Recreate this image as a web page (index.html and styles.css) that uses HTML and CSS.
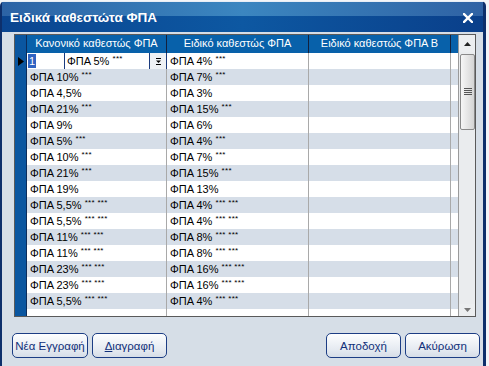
FILE: index.html
```html
<!DOCTYPE html>
<html lang="el">
<head>
<meta charset="utf-8">
<title>Ειδικά καθεστώτα ΦΠΑ</title>
<link rel="stylesheet" href="styles.css">
</head>
<body>
<div class="window">
  <div class="titlebar">
    <span class="title">Ειδικά καθεστώτα ΦΠΑ</span>
    <svg class="close" width="10" height="10" viewBox="0 0 10 10"><path d="M1 1L9 9M9 1L1 9" stroke="#fff" stroke-width="2.4" stroke-linecap="square"/></svg>
  </div>
  <div class="content">
    <div class="grid">
      <div class="rows">
        <div class="row head">
          <div class="rh"></div>
          <div class="c c1">Κανονικό καθεστώς ΦΠΑ</div>
          <div class="c c2">Ειδικό καθεστώς ΦΠΑ</div>
          <div class="c c3">Ειδικό καθεστώς ΦΠΑ Β</div>
          <div class="c c4"></div>
        </div>
        <div class="row odd">
          <div class="rh"><svg width="6" height="9" viewBox="0 0 6 9"><path d="M0 0L6 4.5L0 9Z" fill="#000"/></svg></div>
          <div class="c c1 editing">
            <div class="edit"><span class="sel">1</span></div>
            <div class="combo"><span class="ctext">ΦΠΑ 5% <span class="ast">***</span></span><div class="drop"><svg width="7" height="9" viewBox="0 0 7 9"><path d="M1 1.5H6M1 7.5H6" stroke="#000" stroke-width="1"/><path d="M1 3.5H6L3.5 6Z" fill="#000"/></svg></div></div>
          </div>
          <div class="c c2">ΦΠΑ 4% <span class="ast">***</span></div>
          <div class="c c3"></div>
          <div class="c c4"></div>
        </div>
        <div class="row even"><div class="rh"></div><div class="c c1">ΦΠΑ 10% <span class="ast">***</span></div><div class="c c2">ΦΠΑ 7% <span class="ast">***</span></div><div class="c c3"></div><div class="c c4"></div></div>
        <div class="row odd"><div class="rh"></div><div class="c c1">ΦΠΑ 4,5%</div><div class="c c2">ΦΠΑ 3%</div><div class="c c3"></div><div class="c c4"></div></div>
        <div class="row even"><div class="rh"></div><div class="c c1">ΦΠΑ 21% <span class="ast">***</span></div><div class="c c2">ΦΠΑ 15% <span class="ast">***</span></div><div class="c c3"></div><div class="c c4"></div></div>
        <div class="row odd"><div class="rh"></div><div class="c c1">ΦΠΑ 9%</div><div class="c c2">ΦΠΑ 6%</div><div class="c c3"></div><div class="c c4"></div></div>
        <div class="row even"><div class="rh"></div><div class="c c1">ΦΠΑ 5% <span class="ast">***</span></div><div class="c c2">ΦΠΑ 4% <span class="ast">***</span></div><div class="c c3"></div><div class="c c4"></div></div>
        <div class="row odd"><div class="rh"></div><div class="c c1">ΦΠΑ 10% <span class="ast">***</span></div><div class="c c2">ΦΠΑ 7% <span class="ast">***</span></div><div class="c c3"></div><div class="c c4"></div></div>
        <div class="row even"><div class="rh"></div><div class="c c1">ΦΠΑ 21% <span class="ast">***</span></div><div class="c c2">ΦΠΑ 15% <span class="ast">***</span></div><div class="c c3"></div><div class="c c4"></div></div>
        <div class="row odd"><div class="rh"></div><div class="c c1">ΦΠΑ 19%</div><div class="c c2">ΦΠΑ 13%</div><div class="c c3"></div><div class="c c4"></div></div>
        <div class="row even"><div class="rh"></div><div class="c c1">ΦΠΑ 5,5% <span class="ast">*** ***</span></div><div class="c c2">ΦΠΑ 4% <span class="ast">*** ***</span></div><div class="c c3"></div><div class="c c4"></div></div>
        <div class="row odd"><div class="rh"></div><div class="c c1">ΦΠΑ 5,5% <span class="ast">*** ***</span></div><div class="c c2">ΦΠΑ 4% <span class="ast">*** ***</span></div><div class="c c3"></div><div class="c c4"></div></div>
        <div class="row even"><div class="rh"></div><div class="c c1">ΦΠΑ 11% <span class="ast">*** ***</span></div><div class="c c2">ΦΠΑ 8% <span class="ast">*** ***</span></div><div class="c c3"></div><div class="c c4"></div></div>
        <div class="row odd"><div class="rh"></div><div class="c c1">ΦΠΑ 11% <span class="ast">*** ***</span></div><div class="c c2">ΦΠΑ 8% <span class="ast">*** ***</span></div><div class="c c3"></div><div class="c c4"></div></div>
        <div class="row even"><div class="rh"></div><div class="c c1">ΦΠΑ 23% <span class="ast">*** ***</span></div><div class="c c2">ΦΠΑ 16% <span class="ast">*** ***</span></div><div class="c c3"></div><div class="c c4"></div></div>
        <div class="row odd"><div class="rh"></div><div class="c c1">ΦΠΑ 23% <span class="ast">*** ***</span></div><div class="c c2">ΦΠΑ 16% <span class="ast">*** ***</span></div><div class="c c3"></div><div class="c c4"></div></div>
        <div class="row even"><div class="rh"></div><div class="c c1">ΦΠΑ 5,5% <span class="ast">*** ***</span></div><div class="c c2">ΦΠΑ 4% <span class="ast">*** ***</span></div><div class="c c3"></div><div class="c c4"></div></div>
        <div class="row filler"><div class="rh"></div><div class="c c1"></div><div class="c c2"></div><div class="c c3"></div><div class="c c4"></div></div>
      </div>
      <div class="scrollbar">
        <div class="sbtn up"><svg width="7" height="4" viewBox="0 0 7 4"><path d="M0 4L3.5 0L7 4Z" fill="#222"/></svg></div>
        <div class="track">
          <div class="thumb"><svg width="8" height="8" viewBox="0 0 8 8"><path d="M0 0.5H8M0 2.5H8M0 4.5H8M0 6.5H8" stroke="#555" stroke-width="1"/></svg></div>
        </div>
        <div class="sbtn down"><svg width="7" height="4" viewBox="0 0 7 4"><path d="M0 0L3.5 4L7 0Z" fill="#777"/></svg></div>
      </div>
    </div>
    <div class="buttons">
      <div class="group">
        <button class="btn b-new">Νέα Εγγραφή</button>
        <button class="btn b-del"><u>Δ</u>ιαγραφή</button>
      </div>
      <div class="group">
        <button class="btn b-ok">Αποδοχή</button>
        <button class="btn b-cancel">Ακύρωση</button>
      </div>
    </div>
  </div>
</div>
</body>
</html>
```

FILE: styles.css
```css
* { box-sizing: border-box; }
html, body { margin: 0; padding: 0; }
body {
  background: #f3f5f8;
  font-family: "Liberation Sans", Arial, sans-serif;
  font-size: 11px;
  width: 489px;
  height: 366px;
  overflow: hidden;
}
.window {
  margin-top: 1px;
  width: 486px;
  height: 400px;
  border-top: 1px solid #e8eef6;
  border-left: 2px solid #0d2f6b;
  border-right: 3px solid #0d2f6b;
  border-radius: 5px 5px 0 0;
  background: #d6dee7;
  display: flex;
  flex-direction: column;
}
.titlebar {
  height: 30px;
  display: flex;
  align-items: center;
  justify-content: space-between;
  padding: 0 10px 0 8px;
  background:
    linear-gradient(to right, #2c63a5 0%, #3b86c0 50%, #2f62a4 100%) top / 100% 14px no-repeat,
    linear-gradient(to right, #0a4590 0%, #0d58a2 50%, #0a3f8a 100%) bottom / 100% 16px no-repeat;
}
.title {
  color: #fff;
  font-weight: bold;
  font-size: 13.5px;
  padding-top: 1px;
}
.close { display: block; margin-top: 1px; }
.content {
  flex: 1;
  padding: 2px 3px 0 10px;
  display: flex;
  flex-direction: column;
}
.grid {
  margin-left: 2px;
  width: 462px;
  height: 283px;
  border: 1px solid #5a5a5a;
  display: flex;
  background: #fff;
}
.rows {
  width: 443px;
  display: flex;
  flex-direction: column;
}
.row {
  display: flex;
  height: 16px;
  line-height: 16px;
}
.row.head { height: 18px; line-height: 17px; background: #0861aa; color: #fff; }
.row.odd { background: #fff; }
.row.even { background: #d6dee8; }
.row.filler { height: 7px; background: #fff; }
.rh {
  width: 12px;
  flex: none;
  background: #0a56a0;
  border-right: 1px solid #0c2c5a;
  display: flex;
  align-items: center;
  justify-content: center;
  padding-left: 1px;
}
.c {
  flex: none;
  border-right: 1px solid #a9a9a9;
  padding-left: 3px;
  white-space: nowrap;
  overflow: hidden;
}
.c1 { width: 140px; }
.c2 { width: 142px; }
.c3 { width: 142px; }
.c4 { width: 7px; border-right: none; }
.head .c { border-right-color: #13213d; text-align: center; padding-left: 0; }
.head .c4 { border-right: none; }
.ast {
  font-size: 8px;
  vertical-align: top;
  line-height: 12px;
  letter-spacing: 0.3px;
}
.c1.editing {
  display: flex;
  padding-left: 0;
  border-right: 1px solid #1b3b7e;
}
.edit {
  width: 38px;
  min-width: 38px;
  flex: none;
  border-right: 1px solid #1b3b7e;
  padding: 1px 0 1px 1px;
  line-height: 14px;
}
.sel {
  display: inline-block;
  background: #2f63c2;
  color: #fff;
  padding: 0 1px;
  height: 14px;
}
.combo {
  flex: 1;
  display: flex;
  justify-content: space-between;
}
.ctext { padding-left: 2px; }
.drop {
  width: 17px;
  flex: none;
  border-left: 1px solid #1b3b7e;
  background: #eef1f5;
  display: flex;
  align-items: center;
  justify-content: center;
}
.drop svg { display: block; }
.scrollbar {
  width: 17px;
  border-left: 1px solid #9a9a9a;
  background: #eaecee;
  display: flex;
  flex-direction: column;
}
.sbtn {
  height: 17px;
  display: flex;
  align-items: center;
  justify-content: center;
  background: #eceef0;
}
.sbtn.down { height: 12px; }
.track {
  flex: 1;
  padding-top: 2px;
}
.thumb {
  margin-left: 1px;
  width: 15px;
  height: 76px;
  border: 1px solid #8a8a8a;
  border-radius: 2px;
  background: linear-gradient(to right, #f6f6f6, #e2e2e2 60%, #d4d4d4);
  display: flex;
  align-items: center;
  justify-content: center;
}
.thumb svg { display: block; }
.buttons {
  margin-top: 16px;
  display: flex;
  justify-content: space-between;
}
.group { display: flex; gap: 4px; }
.btn {
  height: 25px;
  border: 1px solid #1c3d84;
  border-radius: 5px;
  background: linear-gradient(to bottom, #fdfeff, #e4e9f0 70%, #d6dde7);
  color: #10307a;
  font-family: "Liberation Sans", Arial, sans-serif;
  font-size: 11.5px;
  padding: 0;
}
.btn u { text-decoration: underline; }
.b-new { width: 76px; border-width: 1.5px; }
.b-del { width: 75px; }
.b-ok { width: 75px; }
.b-cancel { width: 75px; }
```
